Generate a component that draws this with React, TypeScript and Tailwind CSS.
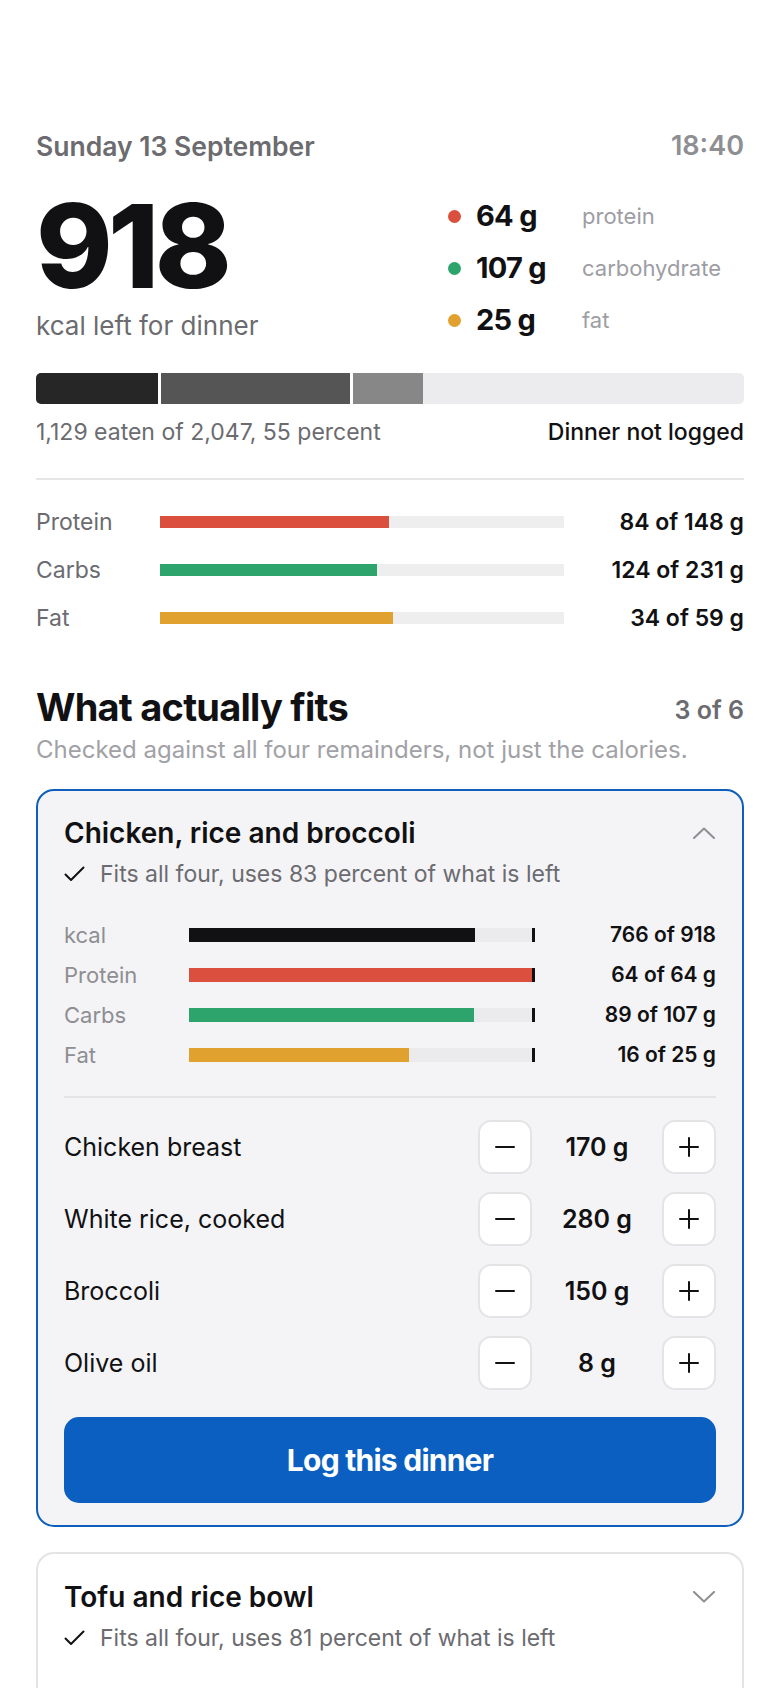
import React from 'react';

// Dinner planner: what is left for today and which meals fit it

interface Macro {
  label: string;
  eaten: number;
  goal: number;
  color: string;
}

interface FitRow {
  label: string;
  used: number;
  left: number;
  unit: string;
  color: string;
}

interface Ingredient {
  name: string;
  amount: string;
}

const macros: Macro[] = [
  { label: 'Protein', eaten: 84, goal: 148, color: 'bg-[#db4f3f]' },
  { label: 'Carbs', eaten: 124, goal: 231, color: 'bg-[#2ea46d]' },
  { label: 'Fat', eaten: 34, goal: 59, color: 'bg-[#e0a12e]' },
];

const chickenRows: FitRow[] = [
  { label: 'kcal', used: 766, left: 918, unit: '', color: 'bg-[#111113]' },
  { label: 'Protein', used: 64, left: 64, unit: ' g', color: 'bg-[#db4f3f]' },
  { label: 'Carbs', used: 89, left: 107, unit: ' g', color: 'bg-[#2ea46d]' },
  { label: 'Fat', used: 16, left: 25, unit: ' g', color: 'bg-[#e0a12e]' },
];

const tofuRows: FitRow[] = [
  { label: 'kcal', used: 744, left: 918, unit: '', color: 'bg-[#111113]' },
  { label: 'Protein', used: 52, left: 64, unit: ' g', color: 'bg-[#db4f3f]' },
  { label: 'Carbs', used: 98, left: 107, unit: ' g', color: 'bg-[#2ea46d]' },
  { label: 'Fat', used: 21, left: 25, unit: ' g', color: 'bg-[#e0a12e]' },
];

const ingredients: Ingredient[] = [
  { name: 'Chicken breast', amount: '170 g' },
  { name: 'White rice, cooked', amount: '280 g' },
  { name: 'Broccoli', amount: '150 g' },
  { name: 'Olive oil', amount: '8 g' },
];

const Chevron = ({ up }: { up: boolean }) => (
  <svg width="22" height="12" viewBox="0 0 22 12" fill="none" className="text-[#8e8e93]">
    <path
      d={up ? 'M1 11 L11 1.5 L21 11' : 'M1 1 L11 10.5 L21 1'}
      stroke="currentColor"
      strokeWidth="2"
      strokeLinecap="round"
      strokeLinejoin="round"
    />
  </svg>
);

const Check = () => (
  <svg width="21" height="16" viewBox="0 0 21 16" fill="none" className="text-[#111113] shrink-0">
    <path d="M1.5 8.5 L7 14 L19.5 1.5" stroke="currentColor" strokeWidth="2" strokeLinecap="round" strokeLinejoin="round" />
  </svg>
);

const Stepper = ({ amount }: { amount: string }) => (
  <div className="flex items-center">
    <button className="w-[54px] h-[54px] rounded-[13px] bg-white border-2 border-[#e4e4e7] flex items-center justify-center">
      <svg width="22" height="22" viewBox="0 0 22 22" fill="none">
        <path d="M2 11 H20" stroke="#111113" strokeWidth="2" strokeLinecap="round" />
      </svg>
    </button>
    <div className="w-[130px] text-center text-[25px] leading-[30px] font-semibold text-[#111113]">{amount}</div>
    <button className="w-[54px] h-[54px] rounded-[13px] bg-white border-2 border-[#e4e4e7] flex items-center justify-center">
      <svg width="22" height="22" viewBox="0 0 22 22" fill="none">
        <path d="M2 11 H20 M11 2 V20" stroke="#111113" strokeWidth="2" strokeLinecap="round" />
      </svg>
    </button>
  </div>
);

const FitBars = ({ rows }: { rows: FitRow[] }) => (
  <div className="mt-[33px] flex flex-col gap-[12px]">
    {rows.map((r) => (
      <div key={r.label} className="grid grid-cols-[125px_346px_1fr] items-center h-[28px]">
        <div className="text-[22px] leading-[28px] text-[#8e8e93]">{r.label}</div>
        <div className="flex items-center">
          <div className="w-[343px] h-[14px] bg-[#ebebed]">
            <div className={`h-full ${r.color}`} style={{ width: `${(r.used / r.left) * 100}%` }} />
          </div>
          <div className="w-[3px] h-[14px] bg-[#111113]" />
        </div>
        <div className="text-right text-[21px] leading-[28px] font-semibold">
          {r.used} of {r.left}
          {r.unit}
        </div>
      </div>
    ))}
  </div>
);

const MealHeader = ({ title, percent, open }: { title: string; percent: number; open: boolean }) => (
  <>
    <div className="flex items-center justify-between h-[32px]">
      <div className="text-[28px] leading-[32px] font-semibold">{title}</div>
      <div className="mr-[1px]">
        <Chevron up={open} />
      </div>
    </div>
    <div className="mt-[11px] flex items-center gap-[15px] h-[28px]">
      <Check />
      <span className="text-[23px] leading-[28px] text-[#6b6b70]">
        Fits all four, uses {percent} percent of what is left
      </span>
    </div>
  </>
);

export default function App() {
  return (
    <div className="w-[780px] h-[1688px] overflow-hidden bg-white px-9 pt-[132px] font-['Inter',sans-serif] text-[#111113]">
      {/* header */}
      <div className="flex items-center justify-between h-[28px]">
        <div className="text-[26.5px] leading-[28px] font-semibold text-[#6b6b70]">Sunday 13 September</div>
        <div className="text-[27px] leading-[28px] font-semibold text-[#8e8e93]">18:40</div>
      </div>

      {/* hero */}
      <div className="flex items-start mt-[28px]">
        <div>
          <div className="text-[116px] leading-none font-extrabold tracking-[-0.04em] text-[#111113]">918</div>
          <div className="mt-[8px] text-[26px] leading-[28px] text-[#6b6b70]">kcal left for dinner</div>
        </div>
        <div className="ml-auto w-[296px] mt-[2px]">
          {[
            { v: '64 g', l: 'protein', c: 'bg-[#db4f3f]' },
            { v: '107 g', l: 'carbohydrate', c: 'bg-[#2ea46d]' },
            { v: '25 g', l: 'fat', c: 'bg-[#e0a12e]' },
          ].map((m) => (
            <div key={m.l} className="flex items-center h-[52px]">
              <span className={`w-[13px] h-[13px] rounded-full ${m.c}`} />
              <span className="ml-[15px] w-[106px] text-[29px] leading-[32px] font-bold tracking-tight">{m.v}</span>
              <span className="text-[22px] leading-[28px] text-[#9d9da3]">{m.l}</span>
            </div>
          ))}
        </div>
      </div>

      {/* day progress */}
      <div className="mt-[27px] h-[31px] rounded-[5px] bg-[#ececee] flex overflow-hidden">
        <div className="w-[125px] h-full bg-[#262627] border-r-[3px] border-white" />
        <div className="w-[192px] h-full bg-[#555556] border-r-[3px] border-white" />
        <div className="w-[70px] h-full bg-[#878788]" />
      </div>
      <div className="mt-[14px] flex justify-between items-center h-[28px]">
        <div className="text-[23px] leading-[28px] text-[#6b6b70]">1,129 eaten of 2,047, 55 percent</div>
        <div className="text-[23px] leading-[28px] font-medium text-[#111113]">Dinner not logged</div>
      </div>

      <div className="mt-[32px] h-[2px] bg-[#e6e6e8]" />

      {/* macro totals */}
      <div className="mt-[28px] flex flex-col gap-[20px]">
        {macros.map((m) => (
          <div key={m.label} className="grid grid-cols-[124px_404px_1fr] items-center h-[28px]">
            <div className="text-[23px] leading-[28px] text-[#6b6b70]">{m.label}</div>
            <div className="h-[12px] bg-[#eeeeef]">
              <div className={`h-full ${m.color}`} style={{ width: `${(m.eaten / m.goal) * 100}%` }} />
            </div>
            <div className="text-right text-[23px] leading-[28px] font-semibold">
              {m.eaten} of {m.goal} g
            </div>
          </div>
        ))}
      </div>

      {/* suggestions */}
      <div className="mt-[55px] flex items-center justify-between h-[40px]">
        <h2 className="text-[38px] leading-[40px] font-bold tracking-[-0.02em]">What actually fits</h2>
        <div className="text-[25px] leading-[30px] font-semibold text-[#6b6b70] mt-[6px]">3 of 6</div>
      </div>
      <div className="mt-[9px] text-[24px] leading-[28px] text-[#a1a1a6]">
        Checked against all four remainders, not just the calories.
      </div>

      <div className="mt-[25px] rounded-[18px] border-2 border-[#0d5fbb] bg-[#f4f4f6] px-[26px] pt-[26px] pb-[22px]">
        <MealHeader title="Chicken, rice and broccoli" percent={83} open />
        <FitBars rows={chickenRows} />

        <div className="mt-[27px] h-[2px] bg-[#e4e4e7]" />

        <div className="mt-[22px] flex flex-col gap-[18px]">
          {ingredients.map((ing) => (
            <div key={ing.name} className="flex items-center justify-between">
              <div className="text-[25px] leading-[30px] text-[#111113]">{ing.name}</div>
              <Stepper amount={ing.amount} />
            </div>
          ))}
        </div>

        <button className="mt-[27px] w-full h-[86px] rounded-[15px] bg-[#0b5fc0] text-white text-[30px] font-bold tracking-tight">
          Log this dinner
        </button>
      </div>

      <div className="mt-[25px] rounded-[18px] border-2 border-[#e4e4e7] bg-white px-[26px] pt-[27px] pb-[26px]">
        <MealHeader title="Tofu and rice bowl" percent={81} open={false} />
        <FitBars rows={tofuRows} />
      </div>
    </div>
  );
}
